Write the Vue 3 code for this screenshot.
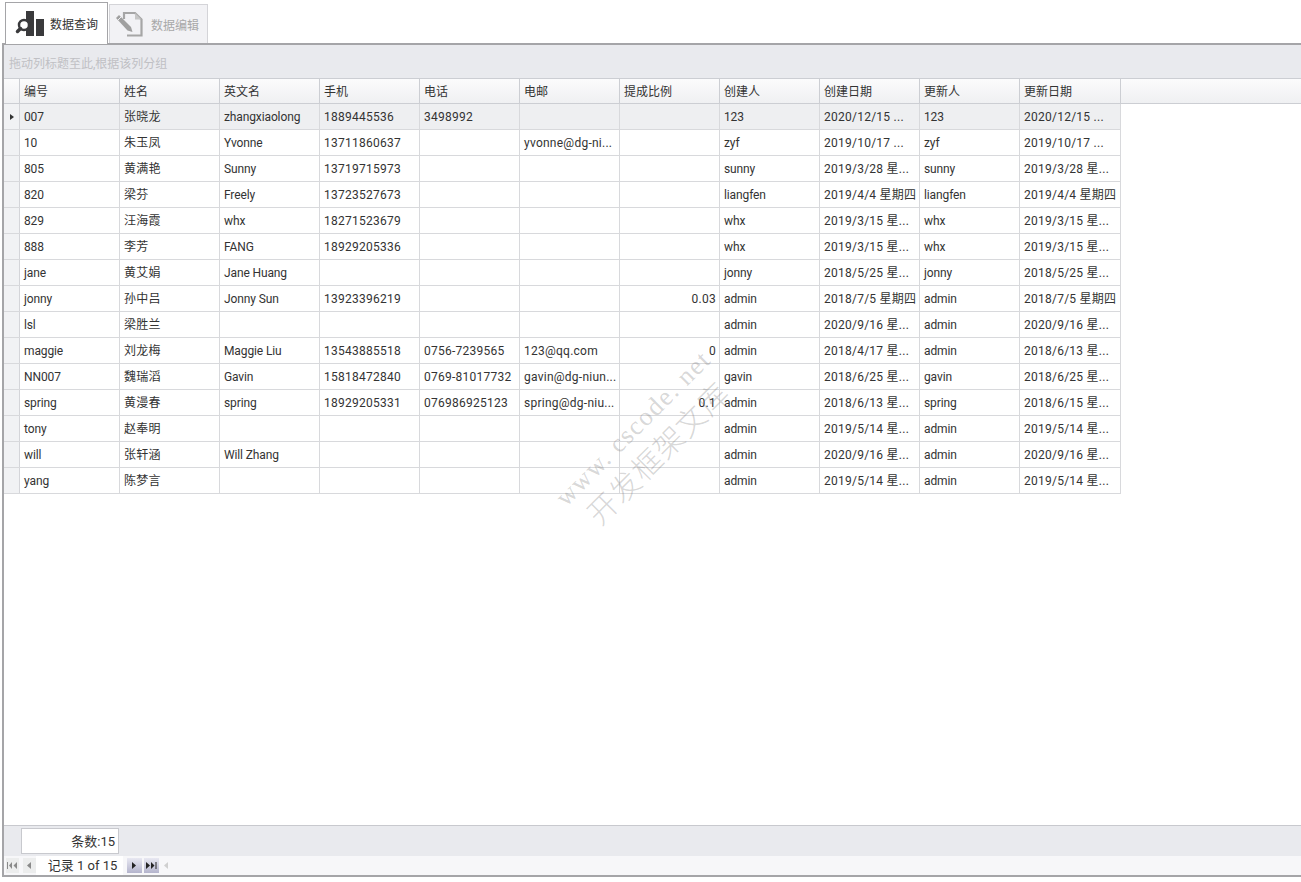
<script setup>
const columns = ['编号', '姓名', '英文名', '手机', '电话', '电邮', '提成比例', '创建人', '创建日期', '更新人', '更新日期']
const tightColumns = [0, 2, 7, 9]
const rows = [
  ['007', '张晓龙', 'zhangxiaolong', '1889445536', '3498992', '', '', '123', '2020/12/15 ...', '123', '2020/12/15 ...'],
  ['10', '朱玉凤', 'Yvonne', '13711860637', '', 'yvonne@dg-ni...', '', 'zyf', '2019/10/17 ...', 'zyf', '2019/10/17 ...'],
  ['805', '黄满艳', 'Sunny', '13719715973', '', '', '', 'sunny', '2019/3/28 星...', 'sunny', '2019/3/28 星...'],
  ['820', '梁芬', 'Freely', '13723527673', '', '', '', 'liangfen', '2019/4/4 星期四', 'liangfen', '2019/4/4 星期四'],
  ['829', '汪海霞', 'whx', '18271523679', '', '', '', 'whx', '2019/3/15 星...', 'whx', '2019/3/15 星...'],
  ['888', '李芳', 'FANG', '18929205336', '', '', '', 'whx', '2019/3/15 星...', 'whx', '2019/3/15 星...'],
  ['jane', '黄艾娟', 'Jane Huang', '', '', '', '', 'jonny', '2018/5/25 星...', 'jonny', '2018/5/25 星...'],
  ['jonny', '孙中吕', 'Jonny Sun', '13923396219', '', '', '0.03', 'admin', '2018/7/5 星期四', 'admin', '2018/7/5 星期四'],
  ['lsl', '梁胜兰', '', '', '', '', '', 'admin', '2020/9/16 星...', 'admin', '2020/9/16 星...'],
  ['maggie', '刘龙梅', 'Maggie Liu', '13543885518', '0756-7239565', '123@qq.com', '0', 'admin', '2018/4/17 星...', 'admin', '2018/6/13 星...'],
  ['NN007', '魏瑞滔', 'Gavin', '15818472840', '0769-81017732', 'gavin@dg-niun...', '', 'gavin', '2018/6/25 星...', 'gavin', '2018/6/25 星...'],
  ['spring', '黄漫春', 'spring', '18929205331', '076986925123', 'spring@dg-niu...', '0.1', 'admin', '2018/6/13 星...', 'spring', '2018/6/15 星...'],
  ['tony', '赵奉明', '', '', '', '', '', 'admin', '2019/5/14 星...', 'admin', '2019/5/14 星...'],
  ['will', '张轩涵', 'Will Zhang', '', '', '', '', 'admin', '2020/9/16 星...', 'admin', '2020/9/16 星...'],
  ['yang', '陈梦言', '', '', '', '', '', 'admin', '2019/5/14 星...', 'admin', '2019/5/14 星...'],
]
</script>

<template>
  <div class="page">
    <div class="tabs">
      <div class="tab active">
        <svg class="tab-icon" width="34" height="28" viewBox="0 0 34 28">
          <rect x="16" y="1" width="8" height="25" fill="#3a3a3c" />
          <rect x="26" y="9" width="8" height="17" fill="#3a3a3c" />
          <circle cx="14" cy="15" r="5" fill="#fff" stroke="#3a3a3c" stroke-width="2.500" />
          <path d="M10.500 18.500 L7.500 21.500" stroke="#3a3a3c" stroke-width="3.500" stroke-linecap="round" />
        </svg>
        <span>数据查询</span>
      </div>
      <div class="tab">
        <svg class="tab-icon" width="28" height="26" viewBox="0 0 28 26">
          <path d="M9 8 V2 H20 L26.500 8.500 V24.500 H12" fill="none" stroke="#a6a6a6" stroke-width="2.200" />
          <path d="M20 2 V8.500 H26.500 Z" fill="#c6c6c6" />
          <path d="M1 7 L4 4 L16 16 L17.500 21 L12.500 19.500 Z" fill="#a0a0a0" />
          <path d="M3 9 L6 6" stroke="#f2f2f5" stroke-width="1" />
        </svg>
        <span>数据编辑</span>
      </div>
    </div>

    <div class="panel">
      <div class="group-bar">拖动列标题至此,根据该列分组</div>

      <div class="grid-area">
        <div class="head-row">
          <div class="indicator head-ind"></div>
          <div v-for="c in columns" :key="c" class="head-cell">{{ c }}</div>
          <div class="head-fill"></div>
        </div>
        <div v-for="(row, i) in rows" :key="i" class="row" :class="{ selected: i === 0 }">
          <div class="indicator"><i v-if="i === 0" class="arrow"></i></div>
          <div
            v-for="(val, j) in row"
            :key="j"
            class="cell"
            :class="{ num: j === 6, tight: tightColumns.includes(j) }"
          >{{ val }}</div>
        </div>

        <div class="watermark">
          <div class="wm-en">www. cscode. net</div>
          <div class="wm-cn">开发框架文库</div>
        </div>
      </div>

      <div class="summary">
        <div class="count">条数:15</div>
      </div>

      <div class="nav">
        <span class="nav-btn light">
          <svg width="11" height="7" viewBox="0 0 11 7"><path d="M0 0h1v7H0zM5 0v7L2 3.500zM10 0v7L6.500 3.500z" fill="#8a8a8a" /></svg>
        </span>
        <span class="nav-btn light second">
          <svg width="5" height="7" viewBox="0 0 5 7"><path d="M4 0v7L0 3.500z" fill="#8a8a8a" /></svg>
        </span>
        <span class="nav-text">记录 1 of 15</span>
        <span class="nav-btn dark">
          <svg width="5" height="7" viewBox="0 0 5 7"><path d="M0 0v7L4 3.500z" fill="#222" /></svg>
        </span>
        <span class="nav-btn dark last">
          <svg width="11" height="7" viewBox="0 0 11 7"><path d="M0 0v7L4 3.500zM5 0v7L8.500 3.500zM9.500 0h1v7h-1z" fill="#222" /></svg>
        </span>
        <span class="nav-btn plain">
          <svg width="5" height="7" viewBox="0 0 5 7"><path d="M4 0v7L0 3.500z" fill="#d0d0d0" /></svg>
        </span>
      </div>
    </div>
  </div>
</template>

<style>
html, body { margin: 0; background: #fff; overflow: hidden; }
</style>

<style scoped>
.page {
  width: 1301px;
  height: 882px;
  box-sizing: border-box;
  padding: 2px 0 5px 2px;
  display: flex;
  flex-direction: column;
  background: #fff;
  font-family: Roboto, "Noto Sans CJK SC", sans-serif;
  font-size: 12px;
  letter-spacing: 0.25px;
  color: #333;
}
.tabs {
  display: flex;
  height: 41px;
  padding-left: 3px;
  gap: 1px;
  position: relative;
  z-index: 1;
  letter-spacing: 0;
}
.tab {
  width: 99px;
  height: 39px;
  margin-top: 2px;
  box-sizing: border-box;
  border: 1px solid #d4d4d8;
  border-bottom: none;
  background: #f2f2f5;
  color: #a8a8a8;
  display: flex;
  align-items: center;
  padding-left: 5px;
  gap: 8px;
  white-space: nowrap;
}
.tab.active {
  width: 103px;
  height: 42px;
  margin-top: 0;
  border: 1px solid #a5a5a8;
  border-bottom: none;
  background: #fff;
  color: #333;
  padding-left: 4px;
  gap: 6px;
}
.tab-icon { flex: none; }
.panel {
  flex: 1;
  min-height: 0;
  display: flex;
  flex-direction: column;
  border-top: 2px solid #a5a5a8;
  border-left: 2px solid #a5a5a8;
  border-bottom: 2px solid #a5a5a8;
}
.group-bar {
  height: 33px;
  flex: none;
  box-sizing: border-box;
  background: #e9eaee;
  color: #c0c0c4;
  line-height: 38px;
  padding-left: 5px;
  white-space: nowrap;
  letter-spacing: 0;
}
.grid-area {
  flex: 1;
  min-height: 0;
  position: relative;
  overflow: hidden;
  background: #fff;
}
.head-row, .row {
  display: flex;
  box-sizing: border-box;
}
.head-row {
  height: 26px;
  border-top: 1px solid #ccced3;
  border-bottom: 1px solid #ccced3;
  background: linear-gradient(#fbfbfc, #eff0f2);
}
.row { height: 26px; width: 1117px; border-bottom: 1px solid #d8d9dc; }
.indicator {
  width: 16px;
  flex: none;
  box-sizing: border-box;
  border-right: 1px solid #d4d5d9;
  display: flex;
  align-items: center;
  justify-content: center;
  background: #f1f2f4;
}
.head-ind { background: transparent; border-right-color: #ccced3; }
.head-cell {
  width: 100px;
  flex: none;
  box-sizing: border-box;
  border-right: 1px solid #ccced3;
  line-height: 26px;
  padding-left: 4px;
  white-space: nowrap;
  letter-spacing: 0;
}
.head-cell:nth-last-child(2) { width: 101px; }
.head-fill { flex: 1; }
.cell {
  width: 100px;
  flex: none;
  box-sizing: border-box;
  border-right: 1px solid #d8d9dc;
  line-height: 26px;
  padding: 0 3px 0 4px;
  white-space: nowrap;
  overflow: hidden;
}
.cell.tight { letter-spacing: -0.12px; }
.cell:last-child { width: 101px; }
.cell.num { text-align: right; }
.row.selected { background: #eeeff1; }
.arrow {
  display: block;
  width: 0;
  height: 0;
  border-left: 4px solid #333;
  border-top: 3.500px solid transparent;
  border-bottom: 3.500px solid transparent;
}
.watermark {
  position: absolute;
  left: 513px;
  top: 328px;
  width: 260px;
  transform: rotate(-45deg);
  transform-origin: 50% 50%;
  color: rgba(120, 120, 120, 0.3);
  font-family: "Liberation Serif", "Noto Sans CJK SC", serif;
  font-weight: 300;
  pointer-events: none;
  text-align: center;
  white-space: nowrap;
}
.wm-en { font-size: 26px; line-height: 34px; letter-spacing: 1.500px; }
.wm-cn { font-size: 30px; line-height: 38px; letter-spacing: 1px; }
.summary {
  height: 31px;
  flex: none;
  box-sizing: border-box;
  border-top: 1px solid #c8c9ce;
  background: #e9eaee;
  padding: 2px 0 0 17px;
}
.count {
  width: 98px;
  height: 26px;
  box-sizing: border-box;
  border: 1px solid #c8c9ce;
  background: #fff;
  text-align: right;
  line-height: 25px;
  padding-right: 3px;
  font-size: 13px;
  letter-spacing: 0;
}
.nav {
  height: 19px;
  flex: none;
  background: #f7f7f9;
  display: flex;
  align-items: center;
  padding-left: 2px;
}
.nav-btn {
  height: 15px;
  width: 13px;
  flex: none;
  display: flex;
  align-items: center;
  justify-content: center;
}
.nav-btn.second { margin-left: 4px; }
.nav-btn.light { background: #eceded; }
.nav-btn.dark { width: 15px; background: linear-gradient(#e8e8f2, #b4b4cc); }
.nav-btn.dark.last { margin-left: 2px; }
.nav-btn.plain { background: transparent; margin-left: 1px; }
.nav-text {
  width: 87px;
  height: 19px;
  margin-right: 4px;
  padding-left: 6px;
  background: #fff;
  text-align: center;
  line-height: 19px;
  white-space: nowrap;
  box-sizing: border-box;
  font-size: 13px;
  letter-spacing: 0;
}
</style>
